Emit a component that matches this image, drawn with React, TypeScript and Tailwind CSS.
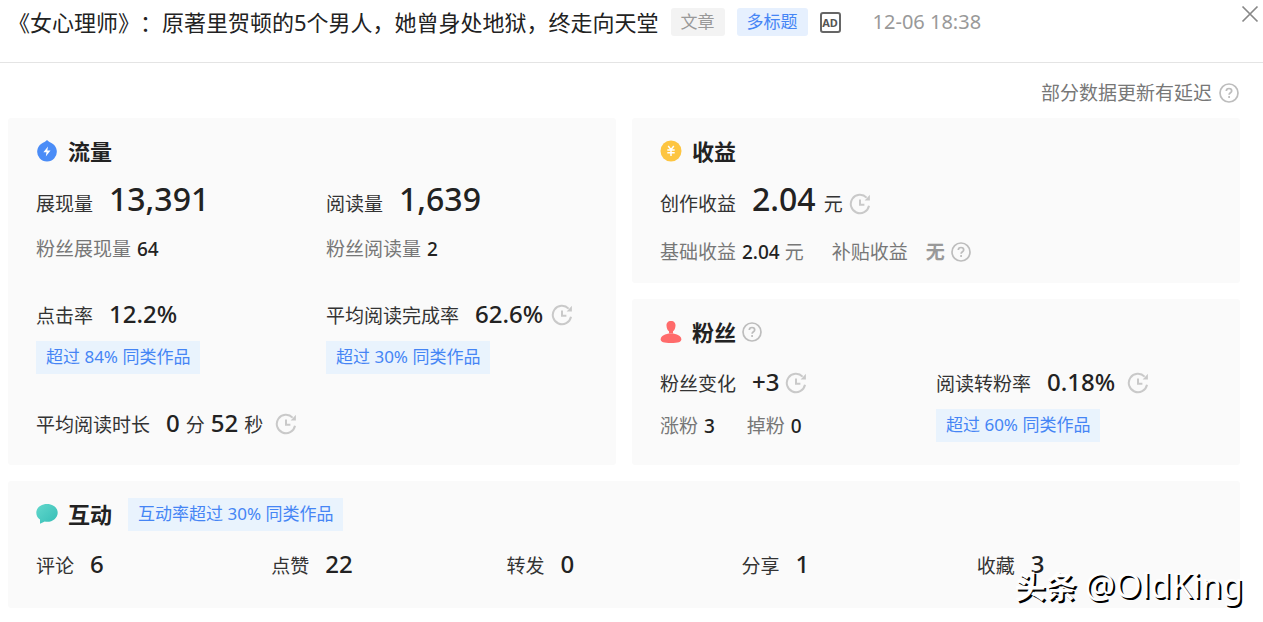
import React from 'react';

const ClockIcon: React.FC = () => (
    <svg className="mb-1 h-[22px] w-[22px] shrink-0 self-end text-[#c9c9c9]" viewBox="0 0 22 22" fill="none" stroke="currentColor" strokeWidth="2" aria-hidden="true">
        <path d="M20 12.8A9.2 9.2 0 1 1 17.6 4.600" />
        <path d="M20.900 1.800v5.800h-5.200z" fill="currentColor" stroke="none" />
        <path d="M11 6.600v5.100h4.400" />
    </svg>
);

const HelpButton: React.FC<{ label: string }> = ({ label }) => (
    <button type="button" aria-label={label} className="shrink-0 text-[#bdbdbd]">
        <svg className="h-5 w-5" viewBox="0 0 20 20" fill="none" stroke="currentColor" strokeWidth="1.7" aria-hidden="true">
            <circle cx="10" cy="10" r="9" />
            <path d="M7.3 8.1c0-1.6 1.2-2.6 2.7-2.6s2.7 1 2.7 2.4c0 1.8-2.6 1.9-2.6 3.9" />
            <path d="M10.1 13.1v1.8" />
        </svg>
    </button>
);

const FlowIcon: React.FC = () => (
    <svg className="h-[22px] w-[22px]" viewBox="0 0 22 22" aria-hidden="true">
        <path d="M11 0C12.2 1.5 14.5 2.4 16.6 3.7A9.8 9.8 0 1 1 5.4 3.7C7.5 2.4 9.8 1.5 11 0z" fill="#4a8cf7" />
        <path d="M12 6.4 7.4 12.3h3.1l-.7 4.3 4.7-6.1h-3.2z" fill="#fff" />
    </svg>
);

const IncomeIcon: React.FC = () => (
    <svg className="h-[22px] w-[22px]" viewBox="0 0 22 22" aria-hidden="true">
        <circle cx="11" cy="11" r="10.5" fill="#fdc541" />
        <path d="m8.2 6 2.8 3.6L13.8 6M7.3 10h7.4M7.3 12.8h7.4M11 9.6V16" fill="none" stroke="#fff" strokeWidth="1.5" />
    </svg>
);

const FansIcon: React.FC = () => (
    <svg className="h-[22px] w-[22px]" viewBox="0 0 22 22" fill="#ff6b6b" aria-hidden="true">
        <path d="M11 0c3.100 0 4.700 2.100 4.500 4.800-.1 2.600-1.200 4.600-2.500 5.500v2.200H9v-2.200C7.700 9.400 6.600 7.400 6.500 4.800 6.300 2.100 7.900 0 11 0z" />
        <path d="M11 12.600c6 0 10.300 2.600 10.300 5.600 0 2.800-3 3.800-10.300 3.800S.7 21 .7 18.200c0-3 4.300-5.600 10.300-5.600z" />
    </svg>
);

const ChatIcon: React.FC = () => (
    <svg className="h-[22px] w-[22px]" viewBox="0 0 22 22" aria-hidden="true">
        <defs>
            <linearGradient id="chat" x1="0" y1="0" x2="1" y2="1">
                <stop offset="0" stopColor="#62d8cc" />
                <stop offset="1" stopColor="#35bdb6" />
            </linearGradient>
        </defs>
        <path d="M11 1c6 0 10.7 3.7 10.7 8.7S17 18.8 11 18.8c-.8 0-1.5 0-2.2-.2L4 20.800v-4.200C1.700 15 .3 12.600.3 9.700.3 4.700 5 1 11 1z" fill="url(#chat)" />
    </svg>
);

const AdIcon: React.FC = () => (
    <span className="flex h-[21px] w-[21px] items-center justify-center rounded-[3px] border-2 border-[#666] text-[11px] leading-none font-bold text-[#555]">
        AD
    </span>
);

const Tag: React.FC<{ children: React.ReactNode }> = ({ children }) => (
    <span className="inline-block h-[33px] w-fit bg-[#e9f3fd] px-[10px] text-[17px] leading-[32px] whitespace-nowrap text-[#4585f5]">{children}</span>
);

const Heading: React.FC<{ icon: React.ReactNode; children: React.ReactNode }> = ({ icon, children }) => (
    <div className="flex items-center gap-[10px]">
        {icon}
        <h2 className="text-[22px] leading-9 font-bold text-[#222]">{children}</h2>
    </div>
);

const Num: React.FC<{ children: React.ReactNode }> = ({ children }) => (
    <span className="text-2xl leading-8 font-medium text-[#222]">{children}</span>
);

const BigNum: React.FC<{ children: React.ReactNode }> = ({ children }) => (
    <span className="text-[32px] leading-10 font-medium text-[#222]">{children}</span>
);

const SmallNum: React.FC<{ children: React.ReactNode }> = ({ children }) => (
    <span className="ml-px font-medium text-[#222]">{children}</span>
);

const interactions = [
    { label: '评论', value: 6 },
    { label: '点赞', value: 22 },
    { label: '转发', value: 0 },
    { label: '分享', value: 1 },
    { label: '收藏', value: 3 },
];

const App: React.FC = () => {
    return (
        <div className="relative min-h-screen bg-white font-['Noto_Sans','Noto_Sans_CJK_SC',sans-serif] text-[19px] leading-7 text-[#333]">
            {/* Title bar */}
            <header className="flex justify-between border-b border-[#e4e4e4] pb-[18px] pl-2">
                <div className="flex h-11 items-center whitespace-nowrap">
                    <h1 className="text-[22px] text-[#222] [text-spacing-trim:space-all]">《女心理师》：原著里贺顿的5个男人，她曾身处地狱，终走向天堂</h1>
                    <span className="ml-3 rounded-[3px] bg-[#f3f3f3] px-[10px] text-[17px] text-[#999]">文章</span>
                    <span className="mr-3 ml-3 rounded-[3px] bg-[#e6f0fe] px-[10px] text-[17px] text-[#4585f5]">多标题</span>
                    <AdIcon />
                    <time className="ml-8 text-[20px] text-[#999]">12-06 18:38</time>
                </div>
                <button type="button" aria-label="关闭" className="h-7 pr-1 text-[#888]">
                    <svg className="h-[18px] w-[18px]" viewBox="0 0 18 18" fill="none" stroke="currentColor" strokeWidth="1.7" aria-hidden="true">
                        <path d="m1.5 1.5 15 15M16.5 1.5l-15 15" />
                    </svg>
                </button>
            </header>

            <main className="pr-[23px] pb-[14px] pl-2">
                <div className="flex h-[55px] items-center justify-end gap-[7px] pt-1 pr-px text-[#777]">
                    <span>部分数据更新有延迟</span>
                    <HelpButton label="数据说明" />
                </div>

                <div className="grid grid-cols-2 gap-4">
                    {/* Traffic */}
                    <section className="row-span-2 rounded-[3px] bg-[#fafafa] pt-[15px] pb-[26px] pl-7">
                        <Heading icon={<FlowIcon />}>流量</Heading>
                        <div className="grid grid-cols-2 whitespace-nowrap">
                            <div className="pt-[10px]">
                                <div className="flex items-baseline gap-4">
                                    <span>展现量</span>
                                    <BigNum>13,391</BigNum>
                                </div>
                                <p className="mt-4 text-[#777]">粉丝展现量 <SmallNum>64</SmallNum></p>
                            </div>
                            <div className="pt-[10px]">
                                <div className="flex items-baseline gap-4">
                                    <span>阅读量</span>
                                    <BigNum>1,639</BigNum>
                                </div>
                                <p className="mt-4 text-[#777]">粉丝阅读量 <SmallNum>2</SmallNum></p>
                            </div>
                            <div className="pt-[35px]">
                                <div className="flex items-baseline gap-4">
                                    <span>点击率</span>
                                    <Num>12.2%</Num>
                                </div>
                                <div className="mt-[11px] flex"><Tag>超过 84% 同类作品</Tag></div>
                            </div>
                            <div className="pt-[35px]">
                                <div className="flex items-center gap-2">
                                    <div className="flex items-baseline gap-4">
                                        <span>平均阅读完成率</span>
                                        <Num>62.6%</Num>
                                    </div>
                                    <ClockIcon />
                                </div>
                                <div className="mt-[11px] flex"><Tag>超过 30% 同类作品</Tag></div>
                            </div>
                        </div>
                        <div className="mt-[33px] flex items-center gap-3">
                            <div className="flex items-baseline gap-4">
                                <span>平均阅读时长</span>
                                <span className="flex items-baseline gap-[6px]">
                                    <Num>0</Num>分<Num>52</Num>秒
                                </span>
                            </div>
                            <ClockIcon />
                        </div>
                    </section>

                    {/* Income */}
                    <section className="rounded-[3px] bg-[#fafafa] px-7 pt-[15px] pb-[17px] whitespace-nowrap">
                        <Heading icon={<IncomeIcon />}>收益</Heading>
                        <div className="mt-[10px] flex items-center gap-[6px]">
                            <div className="flex items-baseline gap-4">
                                <span>创作收益</span>
                                <span className="flex items-baseline gap-2">
                                    <BigNum>2.04</BigNum>元
                                </span>
                            </div>
                            <ClockIcon />
                        </div>
                        <div className="mt-[19px] flex items-center text-[#777]">
                            <span>基础收益 <SmallNum>2.04</SmallNum> 元</span>
                            <span className="ml-7">补贴收益</span>
                            <span className="mr-[6px] ml-[18px] font-bold text-[#999]">无</span>
                            <HelpButton label="补贴收益说明" />
                        </div>
                    </section>

                    {/* Fans */}
                    <section className="rounded-[3px] bg-[#fafafa] px-7 pt-[15px] pb-[23px] whitespace-nowrap">
                        <div className="flex items-center gap-[6px]">
                            <Heading icon={<FansIcon />}>粉丝</Heading>
                            <HelpButton label="粉丝说明" />
                        </div>
                        <div className="mt-4 grid grid-cols-2">
                            <div>
                                <div className="flex items-center gap-[6px]">
                                    <div className="flex items-baseline gap-4">
                                        <span>粉丝变化</span>
                                        <Num>+3</Num>
                                    </div>
                                    <ClockIcon />
                                </div>
                                <div className="mt-[14px] flex gap-8 text-[#777]">
                                    <span>涨粉 <SmallNum>3</SmallNum></span>
                                    <span>掉粉 <SmallNum>0</SmallNum></span>
                                </div>
                            </div>
                            <div>
                                <div className="flex items-center gap-3">
                                    <div className="flex items-baseline gap-4">
                                        <span>阅读转粉率</span>
                                        <Num>0.18%</Num>
                                    </div>
                                    <ClockIcon />
                                </div>
                                <div className="mt-[11px] flex"><Tag>超过 60% 同类作品</Tag></div>
                            </div>
                        </div>
                    </section>

                    {/* Interaction */}
                    <section className="col-span-2 rounded-[3px] bg-[#fafafa] px-7 pt-[15px] pb-7">
                        <div className="flex items-center gap-4">
                            <Heading icon={<ChatIcon />}>互动</Heading>
                            <Tag>互动率超过 30% 同类作品</Tag>
                        </div>
                        <div className="mt-4 grid grid-cols-5">
                            {interactions.map((item) => (
                                <div key={item.label} className="flex items-baseline gap-4">
                                    <span>{item.label}</span>
                                    <Num>{item.value}</Num>
                                </div>
                            ))}
                        </div>
                    </section>
                </div>
            </main>

            {/* Watermark */}
            <div className="pointer-events-none absolute right-5 bottom-5 flex items-baseline gap-2 leading-8 whitespace-nowrap text-white [text-shadow:2px_2px_0_#000]">
                <span className="text-[31px] font-bold">头条</span>
                <span className="text-[34px]">@OldKing</span>
            </div>
        </div>
    );
};

export default App;
